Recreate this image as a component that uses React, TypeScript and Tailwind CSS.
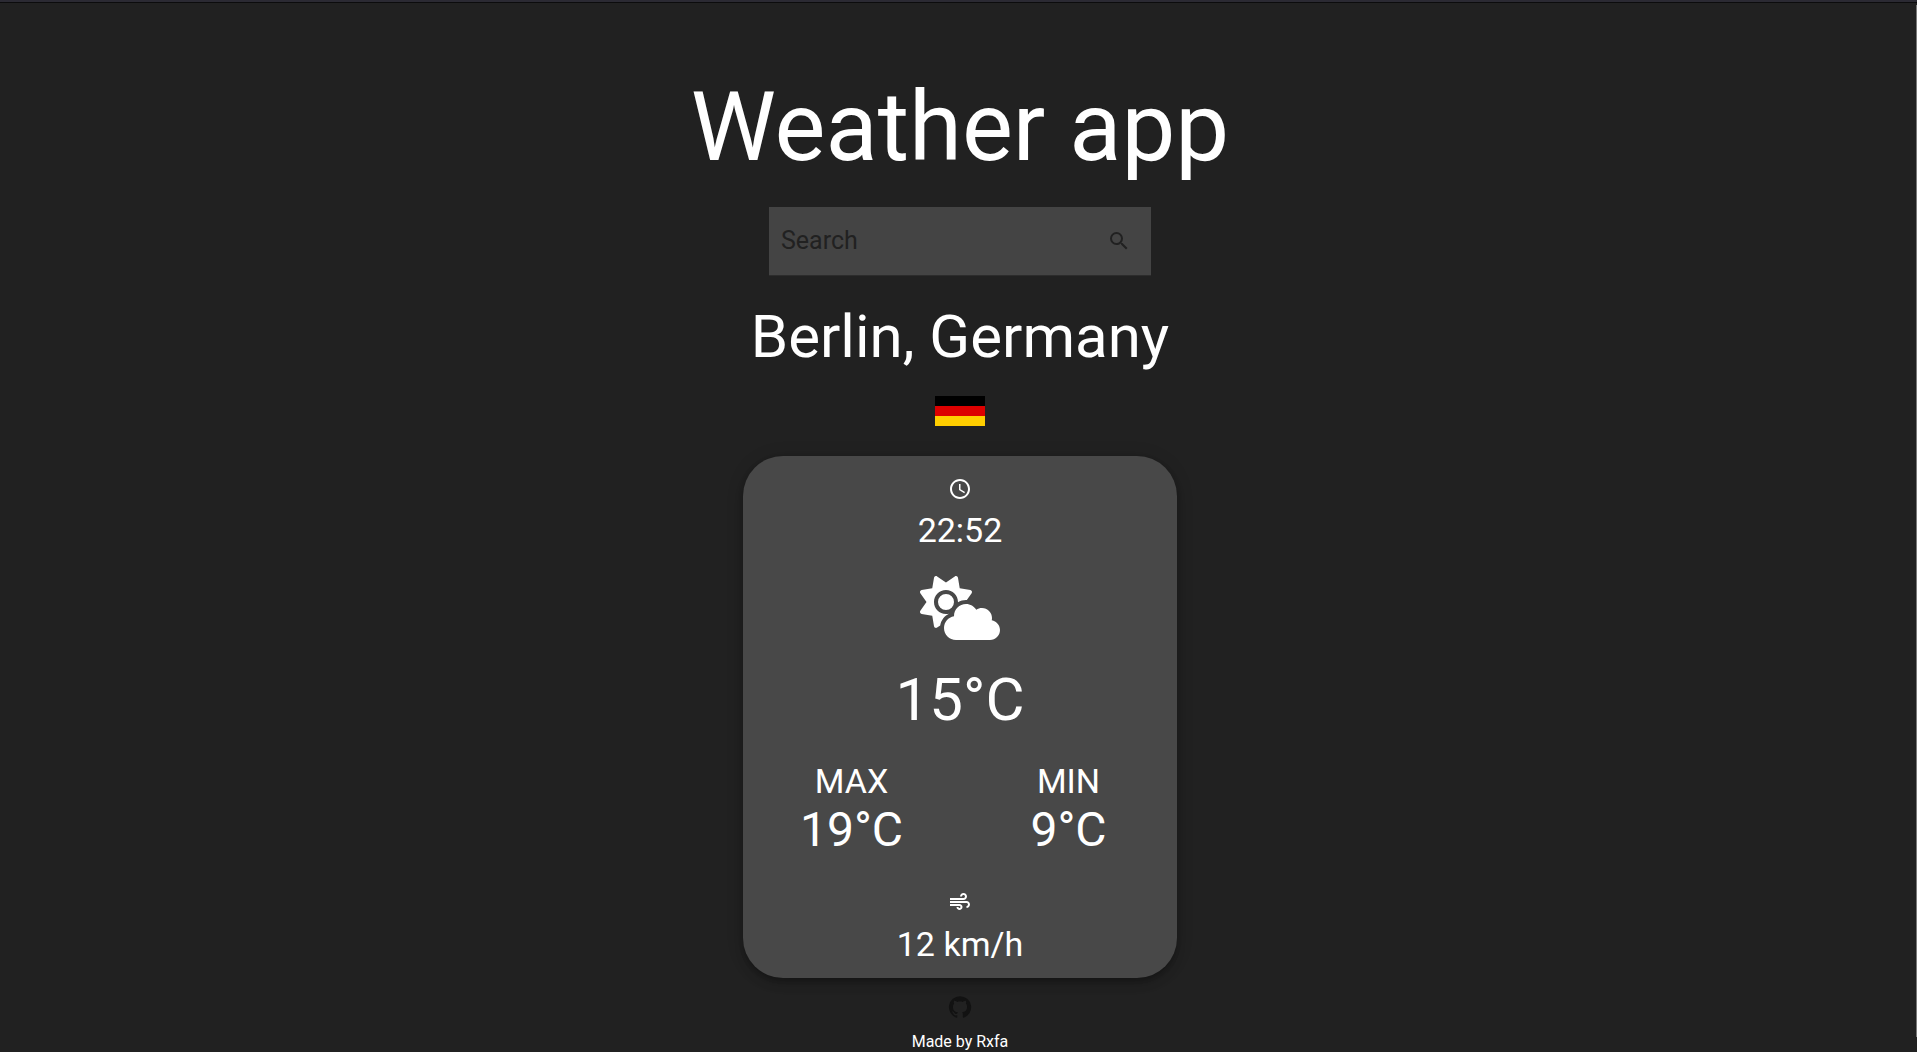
import { MdSearch, MdAccessTime, MdAir } from "react-icons/md";

const font = "font-['Roboto',sans-serif]";

function PartlyCloudyIcon() {
  return (
    <svg viewBox="0 0 640 512" className="h-16 w-20" fill="currentColor" aria-hidden="true">
      <path d="M294.2 1.2c5.1 2.1 8.7 6.7 9.6 12.1l14.1 84.7 84.7 14.1c5.4.9 10 4.5 12.1 9.6s1.5 10.9-1.6 15.4l-38.5 55c-2.2-.1-4.4-.2-6.7-.2-23.3 0-45.1 6.2-64 17.1l0-1.1c0-53-43-96-96-96s-96 43-96 96 43 96 96 96c8.1 0 15.9-1 23.4-2.9-36.6 18.1-63.3 53.1-69.8 94.9l-24.4 17c-4.5 3.2-10.3 3.8-15.4 1.6s-8.7-6.7-9.6-12.1l-14.1-84.7-84.7-14.1c-5.4-.9-10-4.5-12.1-9.6s-1.5-10.9 1.6-15.4l49.2-70.6-49.3-70.7c-3.2-4.5-3.8-10.3-1.6-15.4s6.7-8.7 12.1-9.6l84.8-14.1 14.1-84.7c.9-5.4 4.5-10 9.6-12.1s10.9-1.5 15.4 1.6l70.6 49.2 70.6-49.2c4.5-3.2 10.3-3.8 15.4-1.6zM144 208a64 64 0 1 1 128 0 64 64 0 1 1 -128 0zM639.9 431.9c0 44.2-35.8 80-80 80l-271.9 0c-53 0-96-43-96-96 0-47.6 34.6-87 80-94.6l0-1.3c0-53 43-96 96-96 34.9 0 65.4 18.6 82.2 46.4 13-9.1 28.8-14.4 45.8-14.4 44.2 0 80 35.8 80 80 0 5.9-.6 11.7-1.9 17.2 37.4 6.7 65.8 39.4 65.8 78.7z" />
    </svg>
  );
}

function GithubIcon() {
  return (
    <svg viewBox="0 0 24 24" className="size-6" fill="currentColor" aria-hidden="true">
      <path d="M12 1.27a11 11 0 0 0-3.48 21.46c.55.09.73-.28.73-.55v-1.84c-3.03.64-3.67-1.46-3.67-1.46-.55-1.29-1.28-1.65-1.28-1.65-.92-.65.1-.65.1-.65 1.1 0 1.73 1.1 1.73 1.1.92 1.65 2.57 1.2 3.21.92a2 2 0 0 1 .64-1.47c-2.47-.27-5.04-1.19-5.04-5.5 0-1.1.46-2.1 1.2-2.84a3.76 3.76 0 0 1 0-2.93s.91-.28 3.11 1.1c1.8-.49 3.7-.49 5.5 0 2.1-1.38 3.02-1.1 3.02-1.1a3.76 3.76 0 0 1 .1 2.93c.83.74 1.2 1.74 1.2 2.94 0 4.21-2.57 5.13-5.04 5.4.45.37.82.92.82 2.02v3.03c0 .27.1.64.73.55A11 11 0 0 0 12 1.27" />
    </svg>
  );
}

function Extreme({ label, value }: { label: string; value: string }) {
  return (
    <div className="flex-1 text-center">
      <dt className="text-[34px] leading-[42px]">{label}</dt>
      <dd className="text-5xl leading-[56px]">{value}</dd>
    </div>
  );
}

export default function App() {
  return (
    <div className={`${font} flex min-h-screen flex-col border-t-2 border-[#2b2a33] bg-[#212121] text-white`}>
      <div className="flex flex-1 border-t border-[#0c0c0d]">
        <main className="flex flex-1 flex-col items-center pt-16 pl-1">
          <h1 className="text-8xl leading-[120px]">Weather app</h1>

          <form
            role="search"
            className="mt-5 flex w-[382px] items-center border-b border-[#2c2c2c] bg-[#444444] px-3 py-[14px]"
            onSubmit={(e) => e.preventDefault()}
          >
            <input
              type="text"
              aria-label="Search"
              placeholder="Search"
              className="h-10 min-w-0 flex-1 pb-0.5 text-[25px] text-white outline-none placeholder:text-[#212121]"
            />
            <button type="submit" aria-label="Search" className="p-2 text-[#212121]">
              <MdSearch className="size-6" />
            </button>
          </form>

          <h2 className="mt-[25px] text-6xl leading-[72px]">Berlin, Germany</h2>

          <svg viewBox="0 0 5 3" className="mt-[23px] h-[30px] w-[50px]" role="img" aria-label="Flag of Germany">
            <path fill="#000" d="M0 0h5v3H0z" />
            <path fill="#d00" d="M0 1h5v2H0z" />
            <path fill="#ffce00" d="M0 2h5v1H0z" />
          </svg>

          <section className="mt-[30px] flex w-[434px] flex-col items-center rounded-[40px] bg-[#484848] pt-[21px] pb-[13px] shadow-[0_3px_5px_-1px_rgba(0,0,0,0.2),0_6px_10px_0_rgba(0,0,0,0.14),0_1px_18px_0_rgba(0,0,0,0.12)]">
            <MdAccessTime className="size-6" />
            <p className="mt-2 text-[34px] leading-[42px]">22:52</p>
            <div className="mt-[25px]">
              <PartlyCloudyIcon />
            </div>
            <p className="mt-6 text-6xl leading-[72px]">15°C</p>
            <dl className="mt-6 flex w-full">
              <Extreme label="MAX" value="19°C" />
              <Extreme label="MIN" value="9°C" />
            </dl>
            <MdAir className="mt-8 size-6" />
            <p className="mt-[9px] text-[34px] leading-[42px]">12 km/h</p>
          </section>

          <footer className="mt-[17px] flex flex-col items-center">
            <a href="https://github.com" aria-label="GitHub" className="text-[#121212]">
              <GithubIcon />
            </a>
            <p className="mt-[13px] text-base leading-5">Made by Rxfa</p>
          </footer>
        </main>
        <div className="flex w-px flex-col pt-0.5 pb-[15px]" aria-hidden="true">
          <div className="flex-1 bg-[#7a7a7a]" />
        </div>
      </div>
    </div>
  );
}
